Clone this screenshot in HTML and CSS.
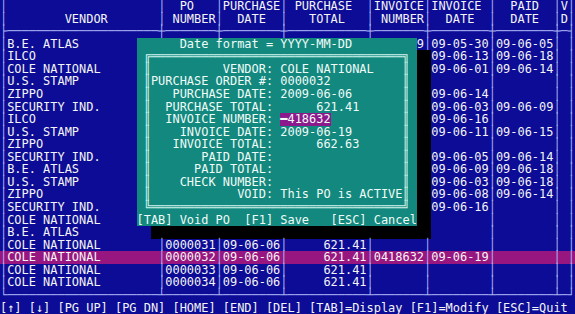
FILE: index.html
```html
<!DOCTYPE html>
<html>
<head>
    <title>PO Browser</title>
    <link rel="stylesheet" href="styles.css">
</head>
<body>
<div class="screen">
<div class="row"><b>│</b>                     <b>│</b>  PO   <b>│</b>PURCHASE<b>│</b> PURCHASE  <b>│</b>INVOICE<b>│</b>INVOICE <b>│</b>  PAID  <b>│</b>V<b>│</b></div>
<div class="row"><b>│</b>        VENDOR       <b>│</b> NUMBER<b>│</b>  DATE  <b>│</b>   TOTAL   <b>│</b> NUMBER<b>│</b>  DATE  <b>│</b>  DATE  <b>│</b>D<b>│</b></div>
<div class="row"><b>├─────────────────────┼───────┼────────┼───────────┼───────┼────────┼────────┼─┤</b></div>
<div class="row"><b>│</b>B.E. ATLAS        <span class="dlg">      Date format = YYYY-MM-DD         </span>9<b>│</b>09-05-30<b>│</b>09-06-05<b>│</b> <b>│</b></div>
<div class="row"><b>│</b>ILCO              <span class="dlg"> <i>╔═══════════════════════════════════╗</i> </span><span class="shd">  </span>09-06-13<b>│</b>09-06-18<b>│</b> <b>│</b></div>
<div class="row"><b>│</b>COLE NATIONAL     <span class="dlg"> <i>║</i>          VENDOR: COLE NATIONAL    <i>║</i> </span><span class="shd">  </span>09-06-01<b>│</b>09-06-14<b>│</b> <b>│</b></div>
<div class="row"><b>│</b>U.S. STAMP        <span class="dlg"> <i>║</i>PURCHASE ORDER #: 0000032          <i>║</i> </span><span class="shd">  </span>        <b>│</b>        <b>│</b> <b>│</b></div>
<div class="row"><b>│</b>ZIPPO             <span class="dlg"> <i>║</i>   PURCHASE DATE: 2009-06-06       <i>║</i> </span><span class="shd">  </span>09-06-14<b>│</b>        <b>│</b> <b>│</b></div>
<div class="row"><b>│</b>SECURITY IND.     <span class="dlg"> <i>║</i>  PURCHASE TOTAL:      621.41      <i>║</i> </span><span class="shd">  </span>09-06-03<b>│</b>09-06-09<b>│</b> <b>│</b></div>
<div class="row"><b>│</b>ILCO              <span class="dlg"> <i>║</i>  INVOICE NUMBER: <span class="fld">━418632</span>          <i>║</i> </span><span class="shd">  </span>09-06-16<b>│</b>        <b>│</b> <b>│</b></div>
<div class="row"><b>│</b>U.S. STAMP        <span class="dlg"> <i>║</i>    INVOICE DATE: 2009-06-19       <i>║</i> </span><span class="shd">  </span>09-06-11<b>│</b>09-06-15<b>│</b> <b>│</b></div>
<div class="row"><b>│</b>ZIPPO             <span class="dlg"> <i>║</i>   INVOICE TOTAL:      662.63      <i>║</i> </span><span class="shd">  </span>        <b>│</b>        <b>│</b> <b>│</b></div>
<div class="row"><b>│</b>SECURITY IND.     <span class="dlg"> <i>║</i>       PAID DATE:                  <i>║</i> </span><span class="shd">  </span>09-06-05<b>│</b>09-06-14<b>│</b> <b>│</b></div>
<div class="row"><b>│</b>B.E. ATLAS        <span class="dlg"> <i>║</i>      PAID TOTAL:                  <i>║</i> </span><span class="shd">  </span>09-06-09<b>│</b>09-06-18<b>│</b> <b>│</b></div>
<div class="row"><b>│</b>U.S. STAMP        <span class="dlg"> <i>║</i>    CHECK NUMBER:                  <i>║</i> </span><span class="shd">  </span>09-06-03<b>│</b>09-06-18<b>│</b> <b>│</b></div>
<div class="row"><b>│</b>ZIPPO             <span class="dlg"> <i>║</i>            VOID: This PO is ACTIVE<i>║</i> </span><span class="shd">  </span>09-06-08<b>│</b>09-06-14<b>│</b> <b>│</b></div>
<div class="row"><b>│</b>SECURITY IND.     <span class="dlg"> <i>╚═══════════════════════════════════╝</i> </span><span class="shd">  </span>09-06-16<b>│</b>        <b>│</b> <b>│</b></div>
<div class="row"><b>│</b>COLE NATIONAL     <span class="dlg">[TAB] Void PO  [F1] Save   [ESC] Cancel</span><span class="shd">  </span>        <b>│</b>        <b>│</b> <b>│</b></div>
<div class="row"><b>│</b>B.E. ATLAS          <span class="shd">                                       </span>        <b>│</b>        <b>│</b> <b>│</b></div>
<div class="row"><b>│</b>COLE NATIONAL        <b>│</b>0000031<b>│</b>09-06-06<b>│</b>     621.41<b>│</b>       <b>│</b>        <b>│</b>        <b>│</b> <b>│</b></div>
<div class="row sel"><b>│</b>COLE NATIONAL        <b>│</b>0000032<b>│</b>09-06-06<b>│</b>     621.41<b>│</b>0418632<b>│</b>09-06-19<b>│</b>        <b>│</b> <b>│</b></div>
<div class="row"><b>│</b>COLE NATIONAL        <b>│</b>0000033<b>│</b>09-06-06<b>│</b>     621.41<b>│</b>       <b>│</b>        <b>│</b>        <b>│</b> <b>│</b></div>
<div class="row"><b>│</b>COLE NATIONAL        <b>│</b>0000034<b>│</b>09-06-06<b>│</b>     621.41<b>│</b>       <b>│</b>        <b>│</b>        <b>│</b> <b>│</b></div>
<div class="row"><b>└─────────────────────┴───────┴────────┴───────────┴───────┴────────┴────────┴─┘</b></div>
<div class="row">[↑] [↓] [PG UP] [PG DN] [HOME] [END] [DEL] [TAB]=Display [F1]=Modify [ESC]=Quit </div>
</div>
</body>
</html>
```

FILE: styles.css
```css
body { margin: 0; background-color: #000; }

.screen {
    width: 575px;
    height: 314px;
    display: grid;
    grid-template-rows: repeat(25, 1fr);
    background-color: #0c0c96;
    color: #f4f4f4;
    font-family: "DejaVu Sans Mono", monospace;
    font-size: 11.94px;
}

.row { white-space: pre; line-height: 12.56px; }
.row b { font-weight: bold; color: #aab2f2; }

.sel { background-color: #98167f; }

.dlg, .shd, .fld {
    display: inline-block;
    height: 100%;
    vertical-align: top;
}

.dlg { background-color: #13887e; color: #f0fbf8; }
.dlg i { font-style: normal; color: #d2f2ec; }
.shd { background-color: #000; }
.fld { background-color: #8c1a8c; }
```
